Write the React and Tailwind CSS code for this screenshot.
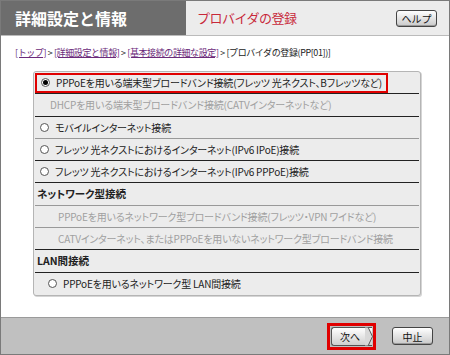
import React from 'react';

const font = "font-['Noto_Sans_CJK_JP','Noto_Sans',sans-serif]";
const palt = "[font-feature-settings:'palt']";

const rows = [
  { kind: 'selected', text: 'PPPoEを用いる端末型ブロードバンド接続(フレッツ 光ネクスト、Bフレッツなど)', line: 'border-[#222]' },
  { kind: 'disabled', text: 'DHCPを用いる端末型ブロードバンド接続(CATVインターネットなど)', line: 'border-[#222]' },
  { kind: 'radio', text: 'モバイルインターネット接続', line: 'border-[#999]' },
  { kind: 'radio', text: 'フレッツ 光ネクストにおけるインターネット(IPv6 IPoE)接続', line: 'border-[#222]' },
  { kind: 'radio', text: 'フレッツ 光ネクストにおけるインターネット(IPv6 PPPoE)接続', line: 'border-[#222]' },
  { kind: 'header', text: 'ネットワーク型接続', line: 'border-[#999]' },
  { kind: 'disabled2', text: 'PPPoEを用いるネットワーク型ブロードバンド接続(フレッツ・VPN ワイドなど)', line: 'border-[#999]' },
  { kind: 'disabled2', text: 'CATVインターネット、またはPPPoEを用いないネットワーク型ブロードバンド接続', line: 'border-[#222]' },
  { kind: 'header', text: 'LAN間接続', line: 'border-[#222]' },
  { kind: 'radio2', text: 'PPPoEを用いるネットワーク型 LAN間接続', line: '' },
];

const Radio = ({ checked }) => (
  <span className="w-[9px] h-[9px] rounded-full border border-[#555] bg-white flex items-center justify-center shrink-0">
    {checked && <span className="w-[5px] h-[5px] rounded-full bg-black" />}
  </span>
);

const Row = ({ row, last }) => {
  const base = `h-[22.3px] flex items-center ${palt} ${last ? '' : `border-b ${row.line}`}`;
  if (row.kind === 'selected') {
    return (
      <div className={base}>
        <div className="h-[20px] w-[353px] border-2 border-[#e00000] flex items-center gap-[6px] pl-[4px] text-[10px] text-[#222] whitespace-nowrap tracking-[-0.2px]">
          <Radio checked />
          {row.text}
        </div>
      </div>
    );
  }
  if (row.kind === 'header') {
    return <div className={`${base} pl-[2px] text-[10.5px] font-bold text-[#222]`}>{row.text}</div>;
  }
  if (row.kind === 'disabled') {
    return <div className={`${base} pl-[15px] text-[10px] text-[#a0a0a0] whitespace-nowrap tracking-[-0.2px]`}>{row.text}</div>;
  }
  if (row.kind === 'disabled2') {
    return <div className={`${base} pl-[23px] text-[10px] text-[#a0a0a0] whitespace-nowrap tracking-[-0.2px]`}>{row.text}</div>;
  }
  return (
    <div className={`${base} ${row.kind === 'radio2' ? 'pl-[13px]' : 'pl-[5px]'} gap-[6px] text-[10px] text-[#222] whitespace-nowrap tracking-[-0.2px]`}>
      <Radio />
      {row.text}
    </div>
  );
};

export default function App() {
  return (
    <div className={`w-[450px] h-[355px] bg-white border border-[#7a7a7a] flex flex-col overflow-hidden ${font}`}>
      {/* header */}
      <div className="h-[35px] flex shrink-0 border-b border-[#bbb]">
        <div className="w-[185px] bg-[#6d6d6d] flex items-center pl-[14px] text-white text-[16px] font-bold">
          詳細設定と情報
        </div>
        <div className="flex-1 bg-[#ececec] flex items-center justify-between pl-[11px] pr-[12px]">
          <span className="text-[#c8283a] text-[13px] tracking-[-0.5px]">プロバイダの登録</span>
          <button className="w-[41px] h-[17px] rounded-[3px] border border-[#444] bg-gradient-to-b from-white to-[#c9c9c9] text-[10px] text-[#111] flex items-center justify-center shadow-[inset_0_-1px_0_#999]">
            ヘルプ
          </button>
        </div>
      </div>

      {/* content */}
      <div className="flex-1 flex flex-col">
        <div className="pl-[14px] pt-[10px] h-[35px] text-[9px] text-[#222] whitespace-nowrap tracking-[-0.4px]">
          <span className="text-[#6b2a7a] underline">[トップ]</span> &gt;{' '}
          <span className="text-[#6b2a7a] underline">[詳細設定と情報]</span> &gt;{' '}
          <span className="text-[#6b2a7a] underline">[基本接続の詳細な設定]</span> &gt; [プロバイダの登録(PP[01])]
        </div>
        <div className="ml-[32px] w-[388px] rounded-[3px] border border-[#b5b5b5] bg-[#ececec] shadow-[1px_1px_0_#d5d5d5] px-[1px]">
          {rows.map((r, i) => (
            <Row key={i} row={r} last={i === rows.length - 1} />
          ))}
        </div>
      </div>

      {/* footer */}
      <div className="h-[37px] shrink-0 bg-[#c0c0c0] border-t border-[#9a9a9a] flex items-center justify-end gap-[16px] pr-[16px]">
        <div className="border-[3px] border-[#e00000] p-[1px]">
          <button className="relative w-[41px] h-[19px] rounded-l-[3px] border border-[#555] border-r-0 bg-gradient-to-b from-white to-[#cfcfcf] text-[10px] text-[#111] flex items-center justify-center pr-[4px]">
            次へ
            <svg className="absolute right-[-1px] top-[-1px]" width="8" height="19" viewBox="0 0 8 19">
              <path d="M0 0 L3 0 L7.5 9.5 L3 19 L0 19" fill="#d8d8d8" stroke="#555" strokeWidth="1" />
            </svg>
          </button>
        </div>
        <button className="w-[41px] h-[18px] rounded-[3px] border border-[#444] bg-gradient-to-b from-white to-[#c9c9c9] text-[10px] text-[#111] flex items-center justify-center shadow-[inset_0_-1px_0_#999]">
          中止
        </button>
      </div>
    </div>
  );
}
